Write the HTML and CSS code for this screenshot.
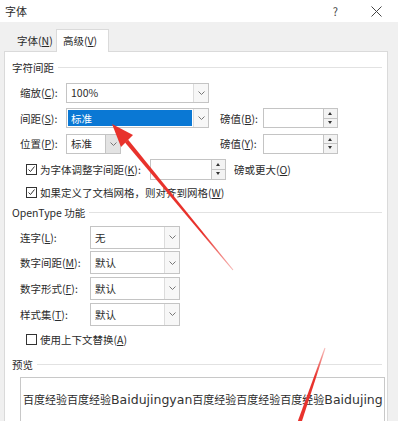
FILE: index.html
```html
<!DOCTYPE html>
<html lang="zh-CN">
<head>
    <meta charset="UTF-8">
    <meta name="viewport" content="width=device-width, initial-scale=1.0">
    <title>字体</title>
    <link rel="stylesheet" href="styles.css">
</head>
<body>
    <div class="dialog">
        <div class="titlebar">
            <span class="title">字体</span>
            <span class="help">?</span>
            <svg class="close" width="11" height="11" viewBox="0 0 11 11"><path d="M0.5 0.5 L10.5 10.5 M10.5 0.5 L0.5 10.5" stroke="#444" stroke-width="1" fill="none"/></svg>
        </div>

        <div class="tabs">
            <div class="tab">字体(<u>N</u>)</div>
            <div class="tab active">高级(<u>V</u>)</div>
        </div>

        <div class="panel">
            <div class="group-title"><span>字符间距</span><i class="rule"></i></div>
            <div class="rows spacing">
                <div class="row">
                    <span class="label">缩放(<u>C</u>):</span>
                    <div class="combo wide"><span class="value">100%</span><span class="drop"></span></div>
                </div>
                <div class="row">
                    <span class="label">间距(<u>S</u>):</span>
                    <div class="combo wide"><span class="value selected">标准</span><span class="drop"></span></div>
                    <span class="label pt">磅值(<u>B</u>):</span>
                    <div class="spin"><span class="field"></span><span class="arrows-col"><b class="up"></b><b class="down"></b></span></div>
                </div>
                <div class="row">
                    <span class="label">位置(<u>P</u>):</span>
                    <div class="combo narrow"><span class="value">标准</span><span class="drop dark"></span></div>
                    <span class="label pt">磅值(<u>Y</u>):</span>
                    <div class="spin"><span class="field"></span><span class="arrows-col"><b class="up"></b><b class="down"></b></span></div>
                </div>
            </div>
            <div class="check-row kern">
                <span class="box checked"></span>
                <span class="check-label">为字体调整字间距(<u>K</u>):</span>
                <div class="spin short"><span class="field"></span><span class="arrows-col"><b class="up"></b><b class="down"></b></span></div>
                <span class="after">磅或更大(<u>O</u>)</span>
            </div>
            <div class="check-row grid-row">
                <span class="box checked"></span>
                <span>如果定义了文档网格，则对齐到网格(<u>W</u>)</span>
            </div>

            <div class="group-title"><span>OpenType 功能</span><i class="rule"></i></div>
            <div class="rows opentype">
                <div class="row">
                    <span class="label">连字(<u>L</u>):</span>
                    <div class="combo select"><span class="value">无</span><span class="drop"></span></div>
                </div>
                <div class="row">
                    <span class="label">数字间距(<u>M</u>):</span>
                    <div class="combo select"><span class="value">默认</span><span class="drop"></span></div>
                </div>
                <div class="row">
                    <span class="label">数字形式(<u>F</u>):</span>
                    <div class="combo select"><span class="value">默认</span><span class="drop"></span></div>
                </div>
                <div class="row">
                    <span class="label">样式集(<u>T</u>):</span>
                    <div class="combo select"><span class="value">默认</span><span class="drop"></span></div>
                </div>
            </div>
            <div class="check-row context">
                <span class="box"></span>
                <span>使用上下文替换(<u>A</u>)</span>
            </div>

            <div class="group-title preview-title"><span>预览</span><i class="rule"></i></div>
            <div class="preview">百度经验百度经验<span class="latin">Baidujingyan</span>百度经验百度经验百度经验<span class="latin">Baidujing</span></div>
        </div>

        <!-- red annotation arrows -->
        <svg class="marks" width="398" height="421" viewBox="0 0 398 421">
            <defs>
                <linearGradient id="fade1" x1="112" y1="124" x2="233" y2="270" gradientUnits="userSpaceOnUse">
                    <stop offset="0" stop-color="#e8322c"/>
                    <stop offset="0.75" stop-color="#e8322c"/>
                    <stop offset="1" stop-color="#e8322c" stop-opacity="0.35"/>
                </linearGradient>
                <linearGradient id="fade2" x1="325" y1="348" x2="300" y2="421" gradientUnits="userSpaceOnUse">
                    <stop offset="0" stop-color="#e8322c" stop-opacity="0.3"/>
                    <stop offset="0.4" stop-color="#e8322c"/>
                    <stop offset="1" stop-color="#e8322c"/>
                </linearGradient>
            </defs>
            <polygon points="112,124 133,135 121,147" fill="#e8322c"/>
            <polygon points="128,139.5 125,142.5 232.6,270.3 233.4,269.7" fill="url(#fade1)"/>
            <polygon points="324.5,347.8 325.5,348.2 292.4,450.8 287.6,449.2" fill="url(#fade2)"/>
        </svg>
    </div>
</body>
</html>
```

FILE: styles.css
```css
body {
    margin: 0;
    font-family: "Noto Sans CJK SC", "Noto Sans", sans-serif;
    font-size: 10.5px;
    color: #2b2b2b;
}
u {
    text-decoration: underline;
    text-underline-offset: 1px;
}
.dialog {
    position: relative;
    width: 398px;
    height: 421px;
    overflow: hidden;
    background-color: #f0f0f0;
}
.titlebar {
    height: 22px;
    display: flex;
    align-items: center;
    padding-left: 5px;
    background-color: #fff;
}
.title {
    font-size: 11px;
}
.help {
    margin-left: auto;
    font-size: 11px;
    color: #444;
}
.close {
    margin-left: 33px;
    margin-right: 16px;
}
.tabs {
    height: 29px;
    display: flex;
    align-items: flex-end;
    padding-left: 5px;
}
.tab {
    width: 39px;
    height: 19px;
    padding-left: 12px;
    line-height: 17px;
}
.tab.active {
    position: relative;
    z-index: 1;
    width: 45px;
    height: 22px;
    padding-left: 6px;
    line-height: 22px;
    margin-bottom: -1px;
    background-color: #fff;
    border: 1px solid #dadada;
    border-bottom: none;
}
.panel {
    width: 384px;
    height: 380px;
    margin-left: 4px;
    padding-top: 6px;
    box-sizing: border-box;
    background-color: #fff;
    border: 1px solid #dadada;
}
.group-title {
    height: 18px;
    display: flex;
    align-items: center;
    gap: 4px;
    padding-left: 7px;
    padding-right: 5px;
}
.rule {
    flex: 1;
    height: 1px;
    background-color: #e2e2e2;
}
.rows {
    padding-left: 15px;
}
.rows.spacing {
    padding-top: 4px;
}
.row {
    height: 25.5px;
    display: flex;
    align-items: center;
}
.spacing .label {
    width: 46px;
}
.spacing .label.pt {
    width: 43px;
    margin-left: 11px;
}
.opentype {
    padding-top: 3px;
}
.opentype .row {
    height: 25.6px;
}
.opentype .label {
    width: 70px;
}
.combo {
    height: 20px;
    display: flex;
    box-sizing: border-box;
    border: 1px solid #c4c4c4;
    background-color: #fff;
}
.combo.wide {
    width: 143px;
}
.combo.narrow {
    width: 55px;
    margin-right: 88px;
}
.combo.select {
    width: 90px;
    height: 23px;
}
.value {
    flex: 1;
    display: flex;
    align-items: center;
    padding-left: 4px;
}
.value.selected {
    margin: 1px;
    padding-left: 3px;
    color: #fff;
    background-color: #0a78d4;
}
.drop {
    width: 14px;
    border-left: 1px solid #dcdcdc;
    background: #f7f7f7 url("data:image/svg+xml,%3Csvg xmlns='http://www.w3.org/2000/svg' width='7' height='4'%3E%3Cpath d='M0.5 0.5 L3.5 3.5 L6.5 0.5' stroke='%23777' fill='none'/%3E%3C/svg%3E") no-repeat center;
}
.drop.dark {
    background-color: #e3e3e3;
    border-left-color: #c4c4c4;
}
.spin {
    width: 75px;
    height: 20px;
    display: flex;
    box-sizing: border-box;
    border: 1px solid #c4c4c4;
}
.spin.short {
    width: 76px;
    height: 21px;
}
.field {
    flex: 1;
}
.arrows-col {
    width: 13px;
    display: flex;
    flex-direction: column;
    border-left: 1px solid #c4c4c4;
}
.arrows-col b {
    flex: 1;
    background-color: #f3f3f3;
    position: relative;
}
.arrows-col b.up {
    border-bottom: 1px solid #c4c4c4;
}
.arrows-col b::after {
    content: "";
    position: absolute;
    left: 4px;
    top: 3px;
    border-left: 2.5px solid transparent;
    border-right: 2.5px solid transparent;
}
.arrows-col b.up::after {
    border-bottom: 3px solid #333;
}
.arrows-col b.down::after {
    top: 2px;
    border-top: 3px solid #333;
}
.check-row {
    display: flex;
    align-items: center;
    padding-left: 21px;
}
.check-row.kern {
    height: 25px;
}
.check-row.grid-row {
    height: 22px;
}
.check-row.context {
    height: 25.5px;
}
.box {
    width: 11px;
    height: 11px;
    box-sizing: border-box;
    border: 1px solid #333;
    margin-right: 3px;
    background-color: #fff;
}
.box.checked {
    background: #fff url("data:image/svg+xml,%3Csvg xmlns='http://www.w3.org/2000/svg' width='9' height='9'%3E%3Cpath d='M1.5 4.5 L3.5 6.5 L7.5 1.5' stroke='%23333' fill='none'/%3E%3C/svg%3E") no-repeat center;
}
.check-label {
    width: 110px;
}
.after {
    margin-left: 8px;
}
.group-title.preview-title {
    margin-top: 3px;
}
.preview {
    margin: 4px 0 0 15px;
    width: 365px;
    height: 60px;
    box-sizing: border-box;
    padding: 12px 0 0 2px;
    border: 1px solid #c8c8c8;
    font-size: 11px;
    line-height: 18px;
    white-space: nowrap;
    overflow: hidden;
}
.latin {
    font-family: "DejaVu Sans", sans-serif;
    font-size: 12.5px;
    color: #333;
}
.marks {
    position: absolute;
    left: 0;
    top: 0;
    pointer-events: none;
}
```
